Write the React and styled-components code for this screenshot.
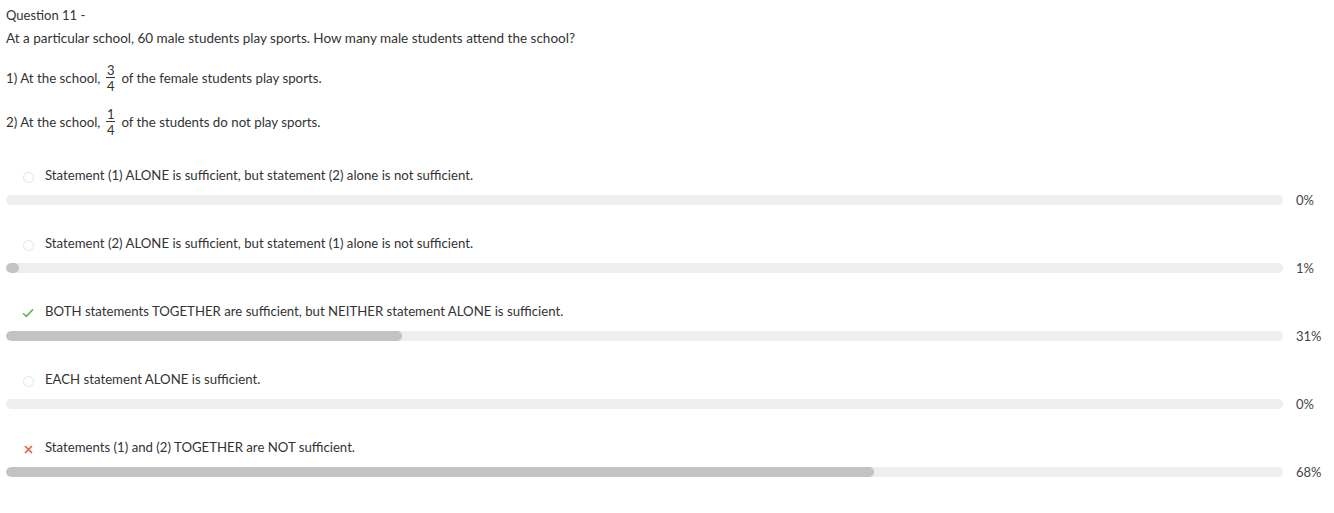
import React from "react";
import styled, { createGlobalStyle } from "styled-components";

const GlobalStyle = createGlobalStyle`
  * {
    margin: 0;
    padding: 0;
    box-sizing: border-box;
  }

  body {
    background: #ffffff;
    color: #333333;
    font-family: Lato, "Open Sans", sans-serif;
    font-size: 13.5px;
  }
`;

const Page = styled.div`
  padding: 6px 6px 0 6px;
`;

const Title = styled.div`
  font-size: 13px;
  line-height: 18px;
`;

const Prompt = styled.p`
  margin-top: 4px;
  line-height: 20px;
`;

const Statement = styled.p`
  margin-top: ${(p) => p.$gap}px;
  line-height: 30px;
  display: flex;
  align-items: center;
  gap: 5px;
  font-size: 13.3px;
`;

const Fraction = styled.span`
  display: inline-flex;
  flex-direction: column;
  align-items: center;
  font-size: 13px;
  line-height: 12px;
  padding: 0 1px;
`;

const FracBar = styled.span`
  display: block;
  width: 9px;
  height: 1px;
  background: #333333;
  margin: 1px 0 2px;
`;

const Options = styled.div`
  margin-top: 28px;
  display: flex;
  flex-direction: column;
  gap: 28px;
`;

const Option = styled.div`
  display: flex;
  flex-direction: column;
  gap: 10px;
`;

const Label = styled.div`
  display: flex;
  align-items: center;
  line-height: 20px;
  padding-left: 14px;
  font-size: 13.2px;
`;

const Marker = styled.span`
  width: 16px;
  height: 20px;
  margin-right: 9px;
  display: flex;
  align-items: center;
  justify-content: center;
`;

const Radio = styled.span`
  width: 11px;
  height: 11px;
  border-radius: 50%;
  border: 1px solid #e4e4e4;
  margin-top: 4px;
`;

const BarRow = styled.div`
  display: flex;
  align-items: center;
  gap: 13px;
`;

const Track = styled.div`
  flex: 1;
  height: 10px;
  border-radius: 5px;
  background: #efefef;
  overflow: hidden;
`;

const Fill = styled.div`
  height: 100%;
  min-width: ${(p) => (p.$pct > 0 ? "13px" : "0")};
  background: #c3c3c3;
  border-radius: 5px;
`;

const Percent = styled.span`
  width: 32px;
  font-size: 13px;
  color: #444444;
  line-height: 10px;
`;

const Check = () => (
  <svg width="12" height="10" viewBox="0 0 12 10" style={{ marginTop: 4 }}>
    <path d="M1 5.2 L4.3 8.4 L11 1.4" fill="none" stroke="#5cb85c" strokeWidth="1.6" />
  </svg>
);

const Cross = () => (
  <svg width="9" height="9" viewBox="0 0 9 9" style={{ marginTop: 5 }}>
    <path d="M1 1 L8 8 M8 1 L1 8" fill="none" stroke="#e8604c" strokeWidth="1.7" />
  </svg>
);

const options = [
  { text: "Statement (1) ALONE is sufficient, but statement (2) alone is not sufficient.", pct: 0, mark: "radio" },
  { text: "Statement (2) ALONE is sufficient, but statement (1) alone is not sufficient.", pct: 1, mark: "radio" },
  { text: "BOTH statements TOGETHER are sufficient, but NEITHER statement ALONE is sufficient.", pct: 31, mark: "check" },
  { text: "EACH statement ALONE is sufficient.", pct: 0, mark: "radio" },
  { text: "Statements (1) and (2) TOGETHER are NOT sufficient.", pct: 68, mark: "cross" },
];

function Frac({ n, d }) {
  return (
    <Fraction>
      <span>{n}</span>
      <FracBar />
      <span>{d}</span>
    </Fraction>
  );
}

export default function App() {
  return (
    <>
      <GlobalStyle />
      <Page>
        <Title>Question 11 -</Title>
        <Prompt>
          At a particular school, 60 male students play sports. How many male students attend the school?
        </Prompt>
        <Statement $gap={15}>
          1) At the school, <Frac n="3" d="4" /> of the female students play sports.
        </Statement>
        <Statement $gap={14}>
          2) At the school, <Frac n="1" d="4" /> of the students do not play sports.
        </Statement>
        <Options>
          {options.map((o) => (
            <Option key={o.text}>
              <Label>
                <Marker>
                  {o.mark === "radio" && <Radio />}
                  {o.mark === "check" && <Check />}
                  {o.mark === "cross" && <Cross />}
                </Marker>
                {o.text}
              </Label>
              <BarRow>
                <Track>
                  <Fill $pct={o.pct} style={{ width: `${o.pct}%` }} />
                </Track>
                <Percent>{o.pct}%</Percent>
              </BarRow>
            </Option>
          ))}
        </Options>
      </Page>
    </>
  );
}
